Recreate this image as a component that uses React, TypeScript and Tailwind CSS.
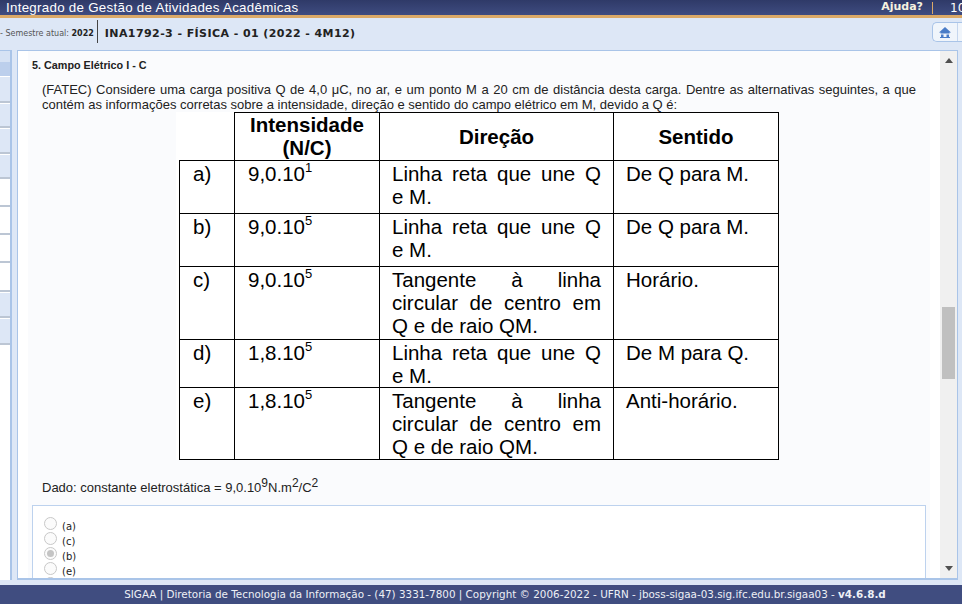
import React from 'react';

const sans = "font-['Liberation_Sans',Arial,sans-serif]";
const verdana = "font-['DejaVu_Sans',Verdana,sans-serif]";

const sideRows = [
  { h: 'h-[27px]', bg: 'bg-[#dde7f6]' },
  { h: 'h-[25px]', bg: 'bg-[#dde7f6]' },
  { h: 'h-[26px]', bg: 'bg-[#dde7f6]' },
  { h: 'h-[25px]', bg: 'bg-[#dde7f6]' },
  { h: 'h-[28px]', bg: 'bg-white' },
  { h: 'h-[28px]', bg: 'bg-white' },
  { h: 'h-[28px]', bg: 'bg-white' },
  { h: 'h-[29px]', bg: 'bg-white' },
  { h: 'h-[26px]', bg: 'bg-[#dde7f6]' },
  { h: 'h-[27px]', bg: 'bg-[#dde7f6]' },
];

const rows = [
  { l: 'a)', v: '9,0.10', e: '1', d: 'Linha reta que une Q e M.', s: 'De Q para M.', h: 'h-[53px]' },
  { l: 'b)', v: '9,0.10', e: '5', d: 'Linha reta que une Q e M.', s: 'De Q para M.', h: 'h-[53px]' },
  { l: 'c)', v: '9,0.10', e: '5', d: 'Tangente à linha circular de centro em Q e de raio QM.', s: 'Horário.', h: 'h-[73px]' },
  { l: 'd)', v: '1,8.10', e: '5', d: 'Linha reta que une Q e M.', s: 'De M para Q.', h: 'h-[48px]' },
  { l: 'e)', v: '1,8.10', e: '5', d: 'Tangente à linha circular de centro em Q e de raio QM.', s: 'Anti-horário.', h: 'h-[73px]' },
];

const options = [
  { t: '(a)', on: false },
  { t: '(c)', on: false },
  { t: '(b)', on: true },
  { t: '(e)', on: false },
  { t: '(d)', on: false },
];

function Radio({ on }: { on: boolean }) {
  return (
    <span className="w-[13px] h-[13px] rounded-full border border-[#c8c8c8] bg-[#fbfbfb] flex items-center justify-center shrink-0">
      {on && <span className="w-[7px] h-[7px] rounded-full bg-[#c4c4c4]" />}
    </span>
  );
}

export default function App() {
  return (
    <div className={`w-[962px] h-[604px] overflow-hidden flex flex-col bg-[#dde7f6] ${sans}`}>
      <header className="h-[18px] shrink-0 bg-gradient-to-b from-[#2f3a68] to-[#3f4c80] border-b-[3px] border-[#dba967] flex items-center justify-between text-white overflow-hidden">
        <span className="pl-[6px] text-[13.33px] tracking-[0.28px] leading-[15px] whitespace-nowrap">Integrado de Gestão de Atividades Acadêmicas</span>
        <div className="flex items-center h-full">
          <span className={`${verdana} text-[11px] font-bold text-[#f5f2e0] pr-[9px]`}>Ajuda?</span>
          <span className="w-px h-[12px] bg-[#dba967] mr-[17px]" />
          <span className={`${verdana} text-[12px] w-[12px] overflow-hidden`}>10</span>
        </div>
      </header>

      <div className="h-[32px] shrink-0 flex items-center">
        <span className={`${verdana} text-[8px] text-[#555] whitespace-nowrap`}>- Semestre atual: <b className="text-[#222]">2022</b></span>
        <span className="w-px h-[23px] bg-[#444] ml-[3px] mr-[7px] mb-[5px]" />
        <span className={`${verdana} text-[11px] font-bold text-[#222] tracking-[0.42px] whitespace-nowrap`}>INA1792-3 - FÍSICA - 01 (2022 - 4M12)</span>
        <div className="ml-auto w-[30px] h-[20px] mb-[4px] border border-r-0 border-[#a9c4e8] rounded-l-[5px] bg-[#f0f5fb] flex">
          <span className="w-[25px] flex items-center justify-center border-r border-[#c5d6ee]">
            <svg width="12" height="11" viewBox="0 0 12 11">
              <path d="M6 0 L12 5.5 H10.5 V6.5 H1.5 V5.5 H0 Z M2 7.5 H4.5 V10 H2 Z M7.5 7.5 H10 V10 H7.5 Z M1 10 H11 V11 H1 Z" fill="#4a7cc7" />
            </svg>
          </span>
        </div>
      </div>

      <div className="flex h-[535px] shrink-0 items-start">
        <aside className="w-[12px] h-[530px] shrink-0 bg-white border-r-2 border-t-1 border-[#a9c4e8] flex flex-col">
          <div className="h-[11px] bg-[#d6e2f4]" />
          <div className="h-[14px] bg-[#bccfec]" />
          {sideRows.map((r, i) => (
            <div key={i} className={`${r.h} ${r.bg} border-b-2 border-[#bcc6d4] border-t-1 border-t-white`} />
          ))}
        </aside>
        <div className="w-[5px] shrink-0" />
        <main className="w-[941px] h-[530px] border border-[#a9c4e8] border-b-2 bg-white flex overflow-hidden">
          <div className="w-[10px] shrink-0" />
          <div className="w-[902px] bg-[#fafbfd] shrink-0 overflow-hidden pl-[4px] pt-[8px]">
            <h3 className="text-[10.8px] font-bold text-[#222] h-[13px] leading-[13px]">5. Campo Elétrico I - C</h3>
            <p className="ml-[10px] w-[874px] mt-[10px] text-[13px] leading-[15px] text-[#222] text-justify">
              (FATEC) Considere uma carga positiva Q de 4,0 μC, no ar, e um ponto M a 20 cm de distância desta carga. Dentre as alternativas seguintes, a que contém as informações corretas sobre a intensidade, direção e sentido do campo elétrico em M, devido a Q é:
            </p>
            <div className="ml-[144px] w-[603px] pl-[3px] text-black bg-white">
              <div className="flex h-[48px] ml-[55px] border-t border-l border-r border-black font-bold text-[20.5px] leading-[23px]">
                <div className="w-[145px] border-r border-black text-center">Intensidade (N/C)</div>
                <div className="w-[234px] border-r border-black flex items-center justify-center">Direção</div>
                <div className="flex-1 flex items-center justify-center">Sentido</div>
              </div>
              {rows.map((r, i) => (
                <div key={i} className={`flex ${r.h} border-t border-l border-r border-black ${i === rows.length - 1 ? 'border-b' : ''} text-[20.5px] leading-[23.3px]`}>
                  <div className="w-[55px] border-r border-black pl-[13px] pt-[0.5px]">{r.l}</div>
                  <div className="w-[145px] border-r border-black pl-[13px] pt-[0.5px]">{r.v}<sup className="text-[13px] top-[-9px]">{r.e}</sup></div>
                  <div className="w-[234px] border-r border-black px-[12px] pt-[0.5px] text-justify">{r.d}</div>
                  <div className="flex-1 pl-[12px] pt-[0.5px]">{r.s}</div>
                </div>
              ))}
            </div>
            <p className="ml-[10px] mt-[17px] text-[13px] h-[22px] leading-[22px] text-[#222]">
              Dado: constante eletrostática = 9,0.10<sup className="text-[12px] top-[-5px]">9</sup>N.m<sup className="text-[12px] top-[-5px]">2</sup>/C<sup className="text-[12px] top-[-5px]">2</sup>
            </p>
            <div className="mt-[6px] mr-[4px] h-[100px] border border-[#bdd2ee] bg-white pl-[11px] pt-[11px] flex flex-col">
              {options.map(o => (
                <label key={o.t} className="flex items-start h-[15px] shrink-0 gap-[5px]">
                  <Radio on={o.on} />
                  <span className={`${verdana} text-[10px] text-[#222] leading-[10px] mt-[5px]`}>{o.t}</span>
                </label>
              ))}
            </div>
          </div>
          <div className="w-[10px] shrink-0" />
          <div className="flex-1 bg-[#f0f0f0] flex flex-col items-center">
            <svg width="8" height="5" viewBox="0 0 8 5" className="mt-[7px] shrink-0"><path d="M4 0 L8 5 H0 Z" fill="#505050" /></svg>
            <div className="w-[13px] h-[72px] bg-[#c0c0c0] mt-[244px] shrink-0" />
            <svg width="8" height="5" viewBox="0 0 8 5" className="mt-auto mb-[7px] shrink-0"><path d="M0 0 H8 L4 5 Z" fill="#505050" /></svg>
          </div>
        </main>
        <div className="w-[4px] shrink-0" />
      </div>

      <footer className={`${verdana} h-[19px] shrink-0 bg-[#404d80] text-[#eef0f6] text-[10.38px] flex items-center justify-center whitespace-nowrap pl-[48px] pt-[1px]`}>
        <span>SIGAA | Diretoria de Tecnologia da Informação - (47) 3331-7800 | Copyright © 2006-2022 - UFRN - jboss-sigaa-03.sig.ifc.edu.br.sigaa03 - <b>v4.6.8.d</b></span>
      </footer>
    </div>
  );
}
